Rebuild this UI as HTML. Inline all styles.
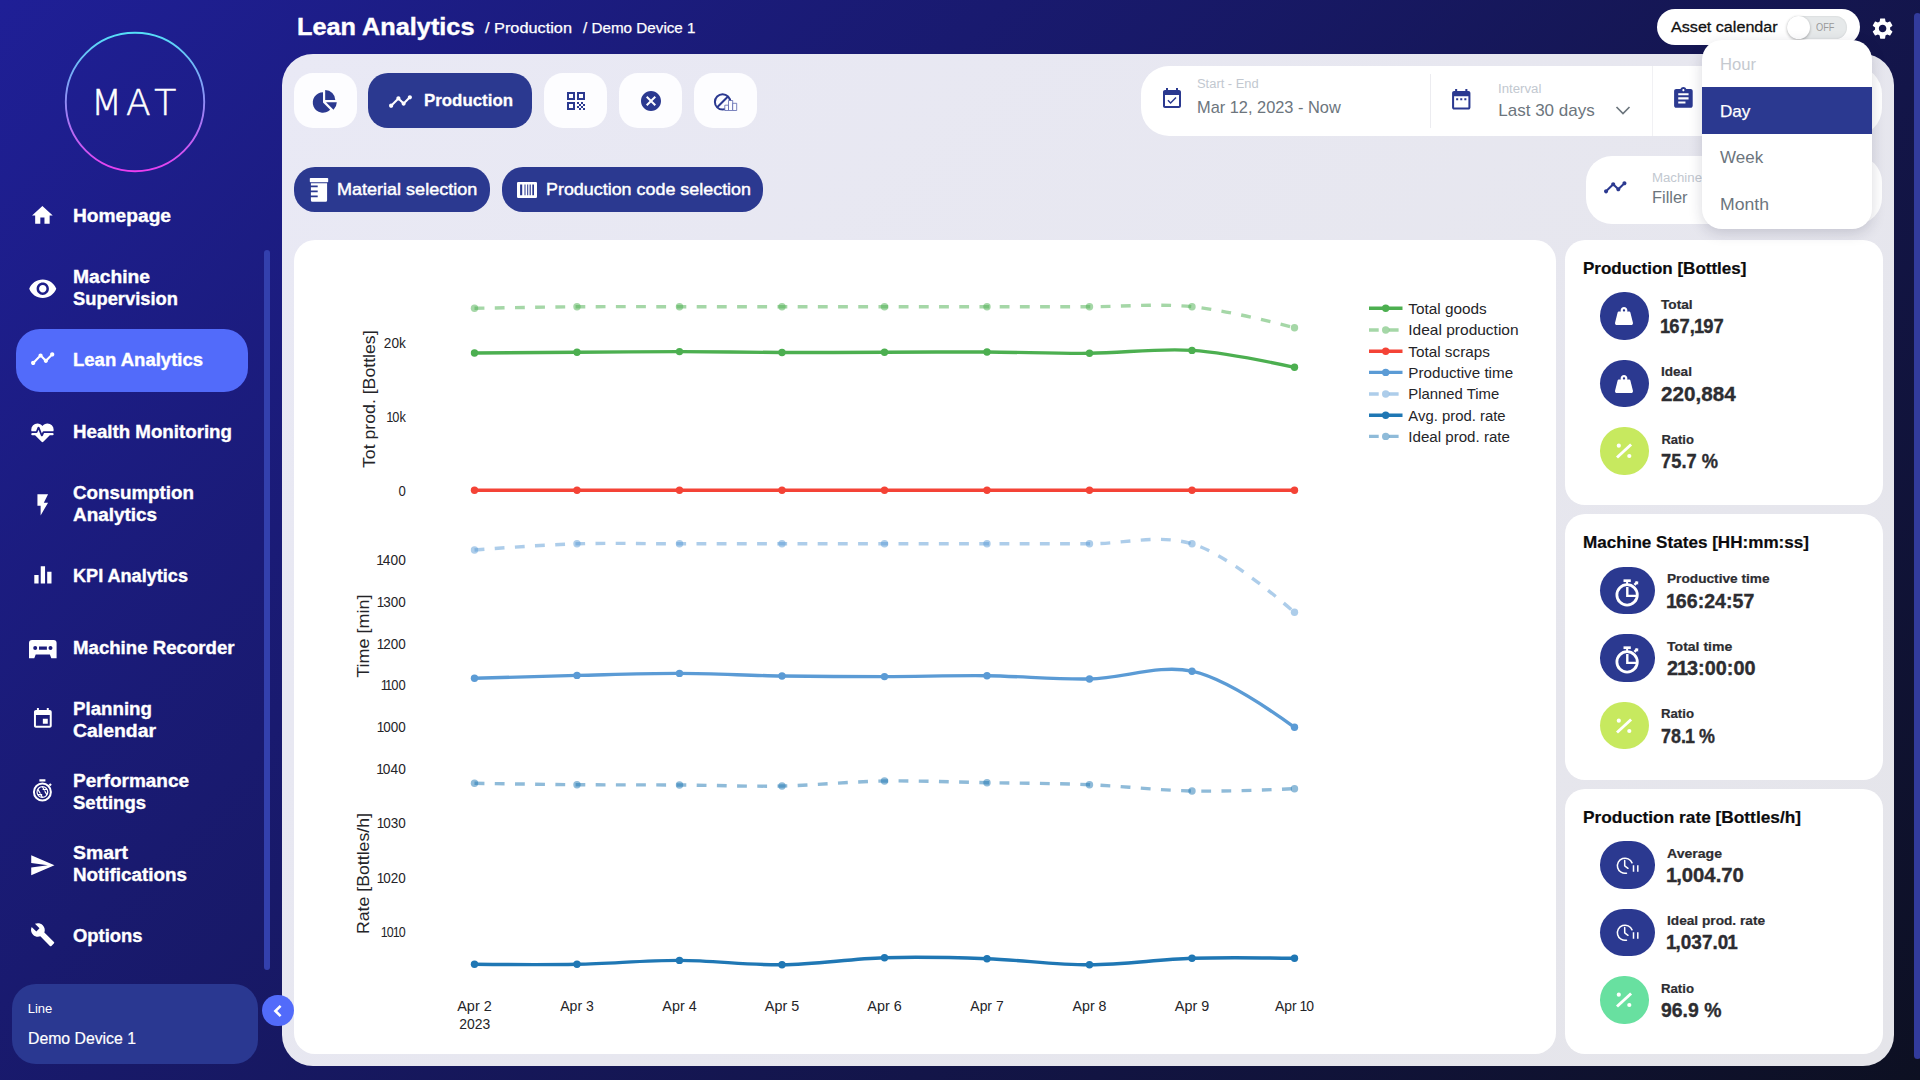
<!DOCTYPE html>
<html lang="en"><head><meta charset="utf-8"><title>Lean Analytics - Production</title>
<style>
*{box-sizing:border-box;margin:0;padding:0}
html,body{width:1920px;height:1080px;overflow:hidden}
body{position:relative;font-family:"Liberation Sans",sans-serif;color:#fff;
 background:linear-gradient(135deg,#1f1f96 0%,#0d1022 100%)}
.t{position:absolute;white-space:nowrap;line-height:1;transform-origin:0 50%;display:block}
.t i{font-style:normal}
.ic{position:absolute;display:block;overflow:visible}
.abs{position:absolute}
</style></head><body>
<aside>
<svg class="ic" style="left:63px;top:30px" width="144" height="144" viewBox="0 0 144 144">
<defs><linearGradient id="lg" x1="0" y1="0" x2="0" y2="1"><stop offset="0" stop-color="#55e0f8"/><stop offset="0.5" stop-color="#8f8cf5"/><stop offset="1" stop-color="#ea3ef0"/></linearGradient></defs>
<circle cx="72" cy="72" r="69.2" fill="none" stroke="url(#lg)" stroke-width="1.9"/>
<text x="28.100 63 91.300" y="85.100" font-family="DejaVu Sans Light, DejaVu Sans, sans-serif" font-weight="200" font-size="36" fill="#fff" stroke="#fff" stroke-width=".55">MAT</text></svg>
<nav>
<svg class="ic" style="left:30.4px;top:202.6px;" width="24.8" height="24.8" viewBox="0 0 24 24" fill="#fff"><path d="M10 20v-6h4v6h5v-8h3L12 3 2 12h3v8z"/></svg>
<span class="t" style="left:72.5px;top:207px;font-size:18px;font-weight:700;transform:scaleX(1.065);-webkit-text-stroke:.35px #fff;">Homepage</span>
<svg class="ic" style="left:27.8px;top:274.4px;" width="29.5" height="29.5" viewBox="0 0 24 24" fill="#fff"><path d="M12 4.5C7 4.5 2.73 7.61 1 12c1.73 4.39 6 7.5 11 7.5s9.27-3.11 11-7.5c-1.73-4.39-6-7.5-11-7.5zM12 17c-2.76 0-5-2.24-5-5s2.24-5 5-5 5 2.24 5 5-2.24 5-5 5zm0-8c-1.66 0-3 1.34-3 3s1.34 3 3 3 3-1.34 3-3-1.34-3-3-3z"/></svg>
<span class="t" style="left:72.5px;top:268px;font-size:18px;font-weight:700;transform:scaleX(1.069);-webkit-text-stroke:.35px #fff;">Machine</span>
<span class="t" style="left:72.5px;top:290px;font-size:18px;font-weight:700;transform:scaleX(1.019);-webkit-text-stroke:.35px #fff;">Supervision</span>
<div style="position:absolute;left:16px;top:329px;width:232px;height:63px;background:#526bfa;border-radius:24px;"></div>
<svg class="ic" style="left:29.8px;top:346.2px;" width="25.4" height="25.4" viewBox="0 0 24 24" fill="#fff"><path d="M23 8c0 1.1-.9 2-2 2-.18 0-.35-.02-.51-.07l-3.56 3.55c.05.16.07.34.07.52 0 1.1-.9 2-2 2s-2-.9-2-2c0-.18.02-.36.07-.52l-2.55-2.55c-.16.05-.34.07-.52.07s-.36-.02-.52-.07l-4.55 4.56c.05.16.07.33.07.51 0 1.1-.9 2-2 2s-2-.9-2-2 .9-2 2-2c.18 0 .35.02.51.07l4.56-4.55C8.02 9.36 8 9.18 8 9c0-1.1.9-2 2-2s2 .9 2 2c0 .18-.02.36-.07.52l2.55 2.55c.16-.05.34-.07.52-.07s.36.02.52.07l3.55-3.56C19.02 8.35 19 8.18 19 8c0-1.1.9-2 2-2s2 .9 2 2z"/></svg>
<span class="t" style="left:72.5px;top:351px;font-size:18px;font-weight:700;transform:scaleX(1.029);-webkit-text-stroke:.35px #fff;">Lean Analytics</span>
<svg class="ic" style="left:29.1px;top:418.9px;" width="26.9" height="26.9" viewBox="0 0 24 24" fill="#fff"><path d="M7.5 4A5.5 5.5 0 0 0 2 9.5c0 .5.09 1 .22 1.5H6.3l1.27-3.37c.3-.8 1.48-.88 1.86 0L11.5 13l.59-1.42c.13-.33.48-.58.91-.58h8.78c.13-.5.22-1 .22-1.500A5.5 5.5 0 0 0 16.5 4c-1.860 0-3.500.93-4.500 2.340C11 4.930 9.360 4 7.500 4M3 12.500a1 1 0 0 0-1 1 1 1 0 0 0 1 1h2.440L11 20c1 .9 1 .9 2 0l5.560-5.500H21a1 1 0 0 0 1-1 1 1 0 0 0-1-1h-7.600l-.93 2.300c-.4 1.010-1.550.870-1.920.030L8.500 9.500l-.960 2.330c-.15.380-.49.670-.94.670H3z"/></svg>
<span class="t" style="left:72.5px;top:423px;font-size:18px;font-weight:700;transform:scaleX(1.039);-webkit-text-stroke:.35px #fff;">Health Monitoring</span>
<svg class="ic" style="left:29.5px;top:491.9px;" width="25.5" height="25.5" viewBox="0 0 24 24" fill="#fff"><path d="M7 2v11h3v9l7-12h-4l4-8z"/></svg>
<span class="t" style="left:72.5px;top:484px;font-size:18px;font-weight:700;transform:scaleX(1.043);-webkit-text-stroke:.35px #fff;">Consumption</span>
<span class="t" style="left:72.5px;top:506px;font-size:18px;font-weight:700;transform:scaleX(1.050);-webkit-text-stroke:.35px #fff;">Analytics</span>
<svg class="ic" style="left:29.6px;top:562.1px;" width="25.8" height="25.8" viewBox="0 0 24 24" fill="#fff"><path d="M10 20h4V4h-4v16zm-6 0h4v-8H4v8zM16 9v11h4V9h-4z"/></svg>
<span class="t" style="left:72.5px;top:567px;font-size:18px;font-weight:700;transform:scaleX(1.005);-webkit-text-stroke:.35px #fff;">KPI Analytics</span>
<svg class="ic" style="left:28.800px;top:640px" width="27.600" height="18.200" viewBox="0 0 27.600 18.200" fill="#fff"><path fill-rule="evenodd" d="M3 0h21.600a3 3 0 0 1 3 3v15.200h-5.300l-1.400-3.600H6.700l-1.400 3.600H0V3a3 3 0 0 1 3-3zM6.200 6.100a2 2 0 1 0 0 4 2 2 0 0 0 0-4zm15.300 0a2 2 0 1 0 0 4 2 2 0 0 0 0-4zM10 6.600v3.100h7.900V6.600z"/></svg>
<span class="t" style="left:72.5px;top:639px;font-size:18px;font-weight:700;transform:scaleX(1.035);-webkit-text-stroke:.35px #fff;">Machine Recorder</span>
<svg class="ic" style="left:30.9px;top:707.2px;" width="23.7" height="23.7" viewBox="0 0 24 24" fill="#fff"><path d="M17 12h-5v5h5v-5zM16 1v2H8V1H6v2H5c-1.110 0-1.990.9-1.990 2L3 19c0 1.100.89 2 2 2h14c1.100 0 2-.9 2-2V5c0-1.100-.9-2-2-2h-1V1h-2zm3 18H5V8h14v11z"/></svg>
<span class="t" style="left:72.5px;top:700px;font-size:18px;font-weight:700;transform:scaleX(1.039);-webkit-text-stroke:.35px #fff;">Planning</span>
<span class="t" style="left:72.5px;top:722px;font-size:18px;font-weight:700;transform:scaleX(1.078);-webkit-text-stroke:.35px #fff;">Calendar</span>
<svg class="ic" style="left:29.3px;top:776.9px;" width="26.8" height="26.8" viewBox="0 0 24 24" fill="#fff"><g fill="none" stroke="#fff"><circle cx="12" cy="13.500" r="7.600" stroke-width="1.800"/><circle cx="12" cy="13.500" r="4.800" stroke-width="1.100"/><path stroke-width="1.100" d="M12 8.700l2 3.400M16.200 11.200h-4M16.100 16l-2-3.400M12 18.300l-2-3.400M7.800 15.800h4M7.900 11l2 3.400"/><path stroke-width="2" d="M9.300 3h5.400M18.300 6.200l1.400 1.400"/></g></svg>
<span class="t" style="left:72.5px;top:772px;font-size:18px;font-weight:700;transform:scaleX(1.054);-webkit-text-stroke:.35px #fff;">Performance</span>
<span class="t" style="left:72.5px;top:794px;font-size:18px;font-weight:700;transform:scaleX(1.028);-webkit-text-stroke:.35px #fff;">Settings</span>
<svg class="ic" style="left:29.2px;top:852.2px;" width="26.6" height="26.6" viewBox="0 0 24 24" fill="#fff"><path d="M2.010 21L23 12 2.010 3 2 10l15 2-15 2z"/></svg>
<span class="t" style="left:72.5px;top:844px;font-size:18px;font-weight:700;transform:scaleX(1.078);-webkit-text-stroke:.35px #fff;">Smart</span>
<span class="t" style="left:72.5px;top:866px;font-size:18px;font-weight:700;transform:scaleX(1.046);-webkit-text-stroke:.35px #fff;">Notifications</span>
<svg class="ic" style="left:29.9px;top:922.4px;" width="25.3" height="25.3" viewBox="0 0 24 24" fill="#fff"><path d="M22.700 19l-9.100-9.100c.9-2.300.4-5-1.500-6.900-2-2-5-2.400-7.400-1.300L9 6 6 9 1.600 4.700C.4 7.100.9 10.100 2.900 12.100c1.900 1.900 4.600 2.400 6.900 1.500l9.100 9.100c.4.400 1 .400 1.400 0l2.300-2.300c.5-.4.500-1.100.100-1.400z"/></svg>
<span class="t" style="left:72.5px;top:927px;font-size:18px;font-weight:700;transform:scaleX(1.022);-webkit-text-stroke:.35px #fff;">Options</span>
</nav>
<div style="position:absolute;left:264px;top:250px;width:6px;height:720px;background:#3340ad;border-radius:3px;"></div>
<div style="position:absolute;left:12px;top:984px;width:246px;height:80px;background:#2a3891;border-radius:24px;"></div>
<span class="t" style="left:27.7px;top:1002px;font-size:13px;">Line</span>
<span class="t" style="left:27.7px;top:1031px;font-size:16px;transform:scaleX(0.987);-webkit-text-stroke:.2px #fff;">Demo Device 1</span>
</aside>
<header>
<span class="t" style="left:297.0px;top:15px;font-size:24px;font-weight:700;transform:scaleX(1.053);-webkit-text-stroke:.4px #fff;">Lean Analytics</span>
<span class="t" style="left:485.0px;top:20px;font-size:15px;transform:scaleX(1.087);-webkit-text-stroke:.25px #fff;">/ Production</span>
<span class="t" style="left:582.5px;top:20px;font-size:15px;transform:scaleX(1.015);-webkit-text-stroke:.25px #fff;">/ Demo Device 1</span>
<div style="position:absolute;left:1657px;top:9px;width:203px;height:36px;background:#fff;border-radius:18px;"></div>
<span class="t" style="left:1670.8px;top:19px;font-size:15px;color:#111;transform:scaleX(1.075);-webkit-text-stroke:.3px #111;">Asset calendar</span>
<div style="position:absolute;left:1787px;top:16px;width:60px;height:22.5px;background:#e6e9ea;border-radius:11.5px;box-shadow:inset 0 0 2px rgba(0,0,0,.12);"></div>
<div style="position:absolute;left:1787px;top:15.5px;width:23px;height:23px;background:#fff;border-radius:11.5px;box-shadow:0 1px 3px rgba(0,0,0,.3);"></div>
<span class="t" style="left:1815.8px;top:23px;font-size:10px;color:#9a9a9a;transform:scaleX(0.925);">OFF</span>
<svg class="ic" style="left:1869.9px;top:15.9px;" width="25.2" height="25.2" viewBox="0 0 24 24" fill="#fff"><path d="M19.140 12.940c.04-.3.060-.610.060-.940 0-.32-.02-.640-.070-.940l2.030-1.580c.18-.14.230-.410.120-.610l-1.920-3.320c-.12-.22-.370-.29-.590-.22l-2.390.960c-.5-.38-1.030-.7-1.620-.940L14.400 2.810c-.04-.24-.240-.410-.480-.410h-3.840c-.24 0-.430.170-.470.410L9.250 5.350C8.660 5.590 8.120 5.920 7.630 6.290L5.240 5.330c-.22-.08-.470 0-.590.220L2.740 8.870C2.620 9.080 2.660 9.340 2.860 9.480l2.030 1.580C4.840 11.360 4.800 11.690 4.800 12s.02.640.070.940l-2.030 1.580c-.18.140-.230.410-.120.610l1.920 3.320c.12.220.370.290.590.220l2.390-.96c.5.380 1.030.7 1.620.940l.36 2.540c.05.240.240.410.480.410h3.840c.24 0 .440-.17.470-.410l.36-2.540c.59-.24 1.130-.56 1.620-.940l2.390.960c.22.080.470 0 .590-.22l1.920-3.320c.12-.22.070-.47-.12-.610L19.140 12.940zM12 15.600c-1.980 0-3.600-1.620-3.600-3.600s1.620-3.600 3.600-3.600 3.600 1.620 3.600 3.600S13.980 15.600 12 15.600z"/></svg>
</header>
<main>
<div style="position:absolute;left:282px;top:54px;width:1612px;height:1011.7px;background:linear-gradient(135deg,#e9e9f5 0%,#e5e5ea 100%);border-radius:31px;"></div>
<div style="position:absolute;left:294px;top:73px;width:63px;height:55px;background:#fdfdff;border-radius:19px;"></div>
<div style="position:absolute;left:544px;top:73px;width:63px;height:55px;background:#fdfdff;border-radius:19px;"></div>
<div style="position:absolute;left:619px;top:73px;width:63px;height:55px;background:#fdfdff;border-radius:19px;"></div>
<div style="position:absolute;left:694px;top:73px;width:63px;height:55px;background:#fdfdff;border-radius:19px;"></div>
<div style="position:absolute;left:368px;top:73px;width:164px;height:55px;background:#2b3990;border-radius:20px;"></div>
<svg class="ic" style="left:388.0px;top:88.5px;" width="25" height="25" viewBox="0 0 24 24" fill="#fff"><path d="M23 8c0 1.1-.9 2-2 2-.18 0-.35-.02-.51-.07l-3.56 3.55c.05.16.07.34.07.52 0 1.1-.9 2-2 2s-2-.9-2-2c0-.18.02-.36.07-.52l-2.55-2.55c-.16.05-.34.07-.52.07s-.36-.02-.52-.07l-4.55 4.56c.05.16.07.33.07.51 0 1.1-.9 2-2 2s-2-.9-2-2 .9-2 2-2c.18 0 .35.02.51.07l4.56-4.55C8.02 9.36 8 9.18 8 9c0-1.1.9-2 2-2s2 .9 2 2c0 .18-.02.36-.07.52l2.55 2.55c.16-.05.34-.07.52-.07s.36.02.52.07l3.55-3.56C19.02 8.35 19 8.18 19 8c0-1.1.9-2 2-2s2 .9 2 2z"/></svg>
<span class="t" style="left:423.7px;top:92px;font-size:17px;font-weight:700;transform:scaleX(0.992);-webkit-text-stroke:.3px #fff;">Production</span>
<svg class="ic" style="left:310px;top:86px" width="30" height="30" viewBox="310 86 30 30" fill="#2b3990"><path d="M323,102.500L323,92.300A10.200,10.200 0 1 0 330.200,109.700Z"/><path d="M325.200,100.100L325.200,90A10.100,10.100 0 0 1 335.300,100.100Z"/><path d="M326,102.300L336.800,102.300A10.800,10.800 0 0 1 333.500,109.800Z"/></svg>
<svg class="ic" style="left:563.5px;top:89.0px;" width="24" height="24" viewBox="0 0 24 24" fill="#2b3990"><path fill-rule="evenodd" d="M3 3h8v8H3zm2 2v4h4V5zM13 3h8v8h-8zm2 2v4h4V5zM3 13h8v8H3zm2 2v4h4v-4zM13 13h2v2h-2zm2 2h2v2h-2zm2-2h2v2h-2zm2 2h2v2h-2zm-6 2h2v2h-2zm2 2h2v2h-2zm2-2h2v2h-2zm2 2h2v2h-2z"/></svg>
<svg class="ic" style="left:639.0px;top:88.8px;" width="24" height="24" viewBox="0 0 24 24" fill="#2b3990"><path d="M12 2C6.470 2 2 6.470 2 12s4.470 10 10 10 10-4.470 10-10S17.530 2 12 2zm5 13.590L15.590 17 12 13.410 8.410 17 7 15.590 10.590 12 7 8.410 8.410 7 12 10.590 15.590 7 17 8.410 13.410 12 17 15.590z"/></svg>
<svg class="ic" style="left:710px;top:88px" width="32" height="28" viewBox="710 88 32 28" fill="none" stroke="#2b3990"><circle cx="722.600" cy="101.900" r="7.700" stroke-width="2"/><path d="M728,96.500L717.200,107.300" stroke-width="2"/><g stroke-width=".8" fill="#fdfdff" stroke="#5a66ad"><path d="M724.800,105.200h3.700v5.300h-3.700z"/><path d="M728.500,100.500h4.200v10h-4.200z"/><path d="M732.700,103.300h4v7.200h-4z"/></g></svg>
<div style="position:absolute;left:294px;top:167px;width:196px;height:45px;background:#2b3990;border-radius:21px;"></div>
<svg class="ic" style="left:308px;top:176px" width="22" height="28" viewBox="308 176 22 28" fill="#fff"><rect x="309.800" y="177.900" width="18.400" height="4.400" rx=".8"/><path fill-rule="evenodd" d="M310.900,183.300h16.200v17a1.500,1.500 0 0 1 -1.500,1.500h-13.200a1.500,1.500 0 0 1 -1.500,-1.500v-3h6.800v-1.700h-6.800v-3.300h6.800v-1.700h-6.800v-3.300h6.800v-1.700h-6.800z"/></svg>
<span class="t" style="left:337.3px;top:181px;font-size:17px;transform:scaleX(1.060);-webkit-text-stroke:.45px #fff;">Material selection</span>
<div style="position:absolute;left:502px;top:167px;width:261px;height:45px;background:#2b3990;border-radius:21px;"></div>
<svg class="ic" style="left:516px;top:180px" width="22" height="20" viewBox="516 180 22 20" fill="#fff"><path fill-rule="evenodd" d="M518.200,181.900h17.600a1.200,1.200 0 0 1 1.200,1.200v13.600a1.200,1.200 0 0 1 -1.200,1.200h-17.600a1.200,1.200 0 0 1 -1.200,-1.200v-13.600a1.200,1.200 0 0 1 1.200,-1.200zM520.100,184.600v10.600h2.100v-10.600zM524.500,184.600v10.600h1v-10.600zM527.200,184.600v10.600h1v-10.600zM529.600,184.600v10.600h1.200v-10.600zM532.300,184.600v10.600h1.700v-10.600z"/></svg>
<span class="t" style="left:545.5px;top:181px;font-size:17px;transform:scaleX(1.053);-webkit-text-stroke:.45px #fff;">Production code selection</span>
<div style="position:absolute;left:1141px;top:66px;width:741px;height:70px;background:#fff;border-radius:28px;"></div>
<svg class="ic" style="left:1160.0px;top:86.7px;" width="24" height="24" viewBox="0 0 24 24" fill="#2b3990"><path d="M16.530 11.060L15.470 10l-4.880 4.880-2.120-2.120-1.060 1.060L10.590 17l5.940-5.940zM19 3h-1V1h-2v2H8V1H6v2H5c-1.110 0-1.990.9-1.990 2L3 19c0 1.100.89 2 2 2h14c1.100 0 2-.9 2-2V5c0-1.100-.9-2-2-2zm0 16H5V8h14v11z"/></svg>
<span class="t" style="left:1197.0px;top:78px;font-size:12px;color:#c2c8d0;transform:scaleX(1.076);">Start - End</span>
<span class="t" style="left:1197.0px;top:99px;font-size:17px;color:#6c757d;transform:scaleX(0.963);">Mar 12, 2023 - Now</span>
<div style="position:absolute;left:1430.4px;top:74px;width:1px;height:54px;background:#ececf0;border-radius:0px;"></div>
<svg class="ic" style="left:1449.2px;top:86.5px;" width="24.5" height="24.5" viewBox="0 0 24 24" fill="#2b3990"><path d="M9 11H7v2h2v-2zm4 0h-2v2h2v-2zm4 0h-2v2h2v-2zm2-7h-1V2h-2v2H8V2H6v2H5c-1.110 0-1.990.9-1.990 2L3 20c0 1.100.89 2 2 2h14c1.100 0 2-.9 2-2V6c0-1.100-.9-2-2-2zm0 16H5V9h14v11z"/></svg>
<span class="t" style="left:1498.3px;top:83px;font-size:12px;color:#c2c8d0;transform:scaleX(1.103);">Interval</span>
<span class="t" style="left:1498.3px;top:102px;font-size:17px;color:#6c757d;">Last 30 days</span>
<svg class="ic" style="left:1612px;top:102px" width="22" height="18" viewBox="1612 102 22 18" fill="none" stroke="#6c757d" stroke-width="1.700"><path d="M1616.500,107L1623,113.500L1629.500,107"/></svg>
<div style="position:absolute;left:1652.2px;top:66px;width:1px;height:70px;background:#f1f1f4;border-radius:0px;"></div>
<svg class="ic" style="left:1671.1px;top:86.4px;" width="24.8" height="24.8" viewBox="0 0 24 24" fill="#2b3990"><path d="M19 3h-4.180C14.400 1.840 13.300 1 12 1c-1.300 0-2.400.84-2.820 2H5c-1.100 0-2 .9-2 2v14c0 1.100.9 2 2 2h14c1.100 0 2-.9 2-2V5c0-1.100-.9-2-2-2zm-7 0c.55 0 1 .45 1 1s-.45 1-1 1-1-.45-1-1 .45-1 1-1zm2 14H7v-2h7v2zm3-4H7v-2h10v2zm0-4H7V7h10v2z"/></svg>
<div style="position:absolute;left:1586px;top:156px;width:296px;height:68px;background:#fff;border-radius:26px;"></div>
<svg class="ic" style="left:1603.2px;top:175.2px;" width="24.5" height="24.5" viewBox="0 0 24 24" fill="#2b3990"><path d="M23 8c0 1.1-.9 2-2 2-.18 0-.35-.02-.51-.07l-3.56 3.55c.05.16.07.34.07.52 0 1.1-.9 2-2 2s-2-.9-2-2c0-.18.02-.36.07-.52l-2.55-2.55c-.16.05-.34.07-.52.07s-.36-.02-.52-.07l-4.55 4.56c.05.16.07.33.07.51 0 1.1-.9 2-2 2s-2-.9-2-2 .9-2 2-2c.18 0 .35.02.51.07l4.56-4.55C8.02 9.36 8 9.18 8 9c0-1.1.9-2 2-2s2 .9 2 2c0 .18-.02.36-.07.52l2.55 2.55c.16-.05.34-.07.52-.07s.36.02.52.07l3.55-3.56C19.02 8.35 19 8.18 19 8c0-1.1.9-2 2-2s2 .9 2 2z"/></svg>
<span class="t" style="left:1652.0px;top:172px;font-size:12px;color:#c2c8d0;transform:scaleX(1.102);">Machine</span>
<span class="t" style="left:1652.0px;top:189px;font-size:17px;color:#6c757d;transform:scaleX(0.964);">Filler</span>
<div class="chart-card" style="position:absolute;left:294px;top:240px;width:1261.8px;height:813.6px;background:#fff;border-radius:21px;"></div>
</main>
<div style="position:absolute;left:1565.4px;top:240px;width:317.6px;height:265px;background:#fff;border-radius:20px;"></div>
<section>
<span class="t" style="left:1583.0px;top:260px;font-size:17px;font-weight:700;color:#0b0b0d;-webkit-text-stroke:.2px #0b0b0d;">Production [Bottles]</span>
<div style="position:absolute;left:1600px;top:292.2px;width:49px;height:47.6px;background:#2b3990;border-radius:23.8px;"></div>
<svg class="ic" style="left:1615.0px;top:307.0px;" width="18" height="18" viewBox="0 0 512 512" fill="#fff"><path d="M510.280 445.860l-73.030-292.130c-3.800-15.190-16.440-25.720-30.870-25.720h-60.250c3.570-10.050 5.880-20.720 5.880-32 0-53.020-42.980-96-96-96s-96 42.980-96 96c0 11.280 2.300 21.950 5.880 32h-60.250c-14.430 0-27.080 10.540-30.870 25.720L1.720 445.860C-6.610 479.170 16.380 512 48.030 512h415.950c31.640 0 54.630-32.830 46.300-66.140zM256 128c-17.640 0-32-14.360-32-32s14.360-32 32-32 32 14.360 32 32-14.360 32-32 32z"/></svg>
<span class="t" style="left:1661.4px;top:298px;font-size:13px;font-weight:700;color:#2d2d31;transform:scaleX(1.050);-webkit-text-stroke:.2px #2d2d31;">Total</span>
<svg class="ic" style="left:1661.4px;top:313px" width="69" height="28" viewBox="0 -20 69 28"><text transform="scale(0.928,1)" dx="-1.03 -1.03 0.00 0.00 -1.03 -1.03 0.00" font-family="Liberation Sans, sans-serif" font-weight="700" font-size="19.8" fill="#2d2d31" stroke="#2d2d31" stroke-width="0.35">167,197</text></svg>
<div style="position:absolute;left:1600px;top:359.7px;width:49px;height:47.6px;background:#2b3990;border-radius:23.8px;"></div>
<svg class="ic" style="left:1615.0px;top:374.5px;" width="18" height="18" viewBox="0 0 512 512" fill="#fff"><path d="M510.280 445.860l-73.030-292.130c-3.800-15.190-16.440-25.720-30.870-25.720h-60.250c3.570-10.050 5.880-20.720 5.880-32 0-53.020-42.980-96-96-96s-96 42.980-96 96c0 11.280 2.300 21.950 5.880 32h-60.250c-14.430 0-27.080 10.540-30.870 25.720L1.720 445.860C-6.610 479.170 16.380 512 48.030 512h415.950c31.640 0 54.630-32.830 46.300-66.140zM256 128c-17.640 0-32-14.360-32-32s14.360-32 32-32 32 14.360 32 32-14.360 32-32 32z"/></svg>
<span class="t" style="left:1661.4px;top:365px;font-size:13px;font-weight:700;color:#2d2d31;transform:scaleX(1.043);-webkit-text-stroke:.2px #2d2d31;">Ideal</span>
<svg class="ic" style="left:1661.4px;top:381px" width="81" height="28" viewBox="0 -20 81 28"><text transform="scale(1.042,1)" dx="0.00 0.00 0.00 0.00 0.00 0.00 0.00" font-family="Liberation Sans, sans-serif" font-weight="700" font-size="19.8" fill="#2d2d31" stroke="#2d2d31" stroke-width="0.35">220,884</text></svg>
<div style="position:absolute;left:1600px;top:427.2px;width:49px;height:47.6px;background:#c7e95f;border-radius:23.8px;"></div>
<svg class="ic" style="left:1612.1px;top:439px" width="24" height="24" viewBox="-12 -12 24 24" fill="#fff"><path d="M-7,6.500L7.100,-6.500" stroke="#fff" stroke-width="2.900" fill="none"/><circle cx="-5.200" cy="-5.300" r="2.100"/><circle cx="5.300" cy="5" r="2.100"/></svg>
<span class="t" style="left:1661.4px;top:433px;font-size:13px;font-weight:700;color:#2d2d31;-webkit-text-stroke:.2px #2d2d31;">Ratio</span>
<svg class="ic" style="left:1661.4px;top:448px" width="63" height="28" viewBox="0 -20 63 28"><text transform="scale(0.925,1)" dx="0.00 0.00 0.00 0.00 0.00 0.00" font-family="Liberation Sans, sans-serif" font-weight="700" font-size="19.8" fill="#2d2d31" stroke="#2d2d31" stroke-width="0.35">75.7 %</text></svg>
</section>
<div style="position:absolute;left:1565.4px;top:514px;width:317.6px;height:266px;background:#fff;border-radius:20px;"></div>
<section>
<span class="t" style="left:1583.0px;top:534px;font-size:17px;font-weight:700;color:#0b0b0d;transform:scaleX(1.005);-webkit-text-stroke:.2px #0b0b0d;">Machine States [HH:mm:ss]</span>
<div style="position:absolute;left:1600px;top:566.8px;width:55px;height:47.6px;background:#2b3990;border-radius:23.8px;"></div>
<svg class="ic" style="left:1611.5px;top:574.6px" width="32" height="32" viewBox="-16 -16 32 32" fill="none" stroke="#fff"><circle cx="-.9" cy="3.900" r="10.200" stroke-width="2.800"/><path d="M-.7,-4V4.900H8.200" stroke-width="2.400"/><path d="M-4.500,-10.300h7.300" stroke-width="2.700"/><path d="M-.9,-9.500v3" stroke-width="2"/><path d="M6.500,-6.200l2.600,-2.600" stroke-width="2.600"/><path d="M7.100,-9.700l3.200,.3-.2,3.300z" fill="#fff" stroke="none"/></svg>
<span class="t" style="left:1666.7px;top:572px;font-size:13px;font-weight:700;color:#2d2d31;transform:scaleX(1.052);-webkit-text-stroke:.2px #2d2d31;">Productive time</span>
<svg class="ic" style="left:1666.7px;top:588px" width="93" height="28" viewBox="0 -20 93 28"><text transform="scale(0.990,1)" dx="-1.03 -1.03 0.00 0.00 0.00 0.00 0.00 0.00 0.00" font-family="Liberation Sans, sans-serif" font-weight="700" font-size="19.8" fill="#2d2d31" stroke="#2d2d31" stroke-width="0.35">166:24:57</text></svg>
<div style="position:absolute;left:1600px;top:634.2px;width:55px;height:47.6px;background:#2b3990;border-radius:23.8px;"></div>
<svg class="ic" style="left:1611.5px;top:642px" width="32" height="32" viewBox="-16 -16 32 32" fill="none" stroke="#fff"><circle cx="-.9" cy="3.900" r="10.200" stroke-width="2.800"/><path d="M-.7,-4V4.900H8.200" stroke-width="2.400"/><path d="M-4.500,-10.300h7.300" stroke-width="2.700"/><path d="M-.9,-9.500v3" stroke-width="2"/><path d="M6.500,-6.200l2.600,-2.600" stroke-width="2.600"/><path d="M7.100,-9.700l3.200,.3-.2,3.300z" fill="#fff" stroke="none"/></svg>
<span class="t" style="left:1666.7px;top:640px;font-size:13px;font-weight:700;color:#2d2d31;transform:scaleX(1.081);-webkit-text-stroke:.2px #2d2d31;">Total time</span>
<svg class="ic" style="left:1666.7px;top:655px" width="95" height="28" viewBox="0 -20 95 28"><text transform="scale(1.004,1)" dx="0.00 -1.03 -1.03 0.00 0.00 0.00 0.00 0.00 0.00" font-family="Liberation Sans, sans-serif" font-weight="700" font-size="19.8" fill="#2d2d31" stroke="#2d2d31" stroke-width="0.35">213:00:00</text></svg>
<div style="position:absolute;left:1600px;top:701.7px;width:49px;height:47.6px;background:#c7e95f;border-radius:23.8px;"></div>
<svg class="ic" style="left:1612.1px;top:713.5px" width="24" height="24" viewBox="-12 -12 24 24" fill="#fff"><path d="M-7,6.500L7.100,-6.500" stroke="#fff" stroke-width="2.900" fill="none"/><circle cx="-5.200" cy="-5.300" r="2.100"/><circle cx="5.300" cy="5" r="2.100"/></svg>
<span class="t" style="left:1661.0px;top:707px;font-size:13px;font-weight:700;color:#2d2d31;transform:scaleX(1.015);-webkit-text-stroke:.2px #2d2d31;">Ratio</span>
<svg class="ic" style="left:1661.0px;top:723px" width="60" height="28" viewBox="0 -20 60 28"><text transform="scale(0.906,1)" dx="0.00 0.00 0.00 -1.03 -1.03 0.00" font-family="Liberation Sans, sans-serif" font-weight="700" font-size="19.8" fill="#2d2d31" stroke="#2d2d31" stroke-width="0.35">78.1 %</text></svg>
</section>
<div style="position:absolute;left:1565.4px;top:789px;width:317.6px;height:264.6px;background:#fff;border-radius:20px;"></div>
<section>
<span class="t" style="left:1583.0px;top:809px;font-size:17px;font-weight:700;color:#0b0b0d;transform:scaleX(1.017);-webkit-text-stroke:.2px #0b0b0d;">Production rate [Bottles/h]</span>
<div style="position:absolute;left:1600px;top:841.2px;width:55px;height:47.6px;background:#2b3990;border-radius:23.8px;"></div>
<svg class="ic" style="left:1611.5px;top:849px" width="32" height="32" viewBox="-16 -16 32 32" fill="none" stroke="#fff" stroke-width="1.500" stroke-linecap="round"><path d="M4.050,-2.100A7.600,7.600 0 1 0 -1.500,8.200"/><path d="M-3.300,-4.600V.8L0,3.300" stroke-linejoin="round"/><path d="M5.500,.2v6.500M9.800,.2v6.500" stroke-linecap="butt" stroke-width="1.500"/></svg>
<span class="t" style="left:1666.7px;top:847px;font-size:13px;font-weight:700;color:#2d2d31;transform:scaleX(1.082);-webkit-text-stroke:.2px #2d2d31;">Average</span>
<svg class="ic" style="left:1666.7px;top:862px" width="83" height="28" viewBox="0 -20 83 28"><text transform="scale(1.025,1)" dx="-1.03 -1.03 0.00 0.00 0.00 0.00 0.00 0.00" font-family="Liberation Sans, sans-serif" font-weight="700" font-size="19.8" fill="#2d2d31" stroke="#2d2d31" stroke-width="0.35">1,004.70</text></svg>
<div style="position:absolute;left:1600px;top:908.6px;width:55px;height:47.6px;background:#2b3990;border-radius:23.8px;"></div>
<svg class="ic" style="left:1611.5px;top:916.4px" width="32" height="32" viewBox="-16 -16 32 32" fill="none" stroke="#fff" stroke-width="1.500" stroke-linecap="round"><path d="M4.050,-2.100A7.600,7.600 0 1 0 -1.500,8.200"/><path d="M-3.300,-4.600V.8L0,3.300" stroke-linejoin="round"/><path d="M5.500,.2v6.500M9.800,.2v6.500" stroke-linecap="butt" stroke-width="1.500"/></svg>
<span class="t" style="left:1666.7px;top:914px;font-size:13px;font-weight:700;color:#2d2d31;transform:scaleX(1.052);-webkit-text-stroke:.2px #2d2d31;">Ideal prod. rate</span>
<svg class="ic" style="left:1666.7px;top:929px" width="77" height="28" viewBox="0 -20 77 28"><text transform="scale(0.957,1)" dx="-1.03 -1.03 0.00 0.00 0.00 0.00 0.00 -1.03" font-family="Liberation Sans, sans-serif" font-weight="700" font-size="19.8" fill="#2d2d31" stroke="#2d2d31" stroke-width="0.35">1,037.01</text></svg>
<div style="position:absolute;left:1600px;top:976.2px;width:49px;height:47.6px;background:#68e0a0;border-radius:23.8px;"></div>
<svg class="ic" style="left:1612.1px;top:988px" width="24" height="24" viewBox="-12 -12 24 24" fill="#fff"><path d="M-7,6.500L7.100,-6.500" stroke="#fff" stroke-width="2.900" fill="none"/><circle cx="-5.200" cy="-5.300" r="2.100"/><circle cx="5.300" cy="5" r="2.100"/></svg>
<span class="t" style="left:1661.0px;top:982px;font-size:13px;font-weight:700;color:#2d2d31;transform:scaleX(1.015);-webkit-text-stroke:.2px #2d2d31;">Ratio</span>
<svg class="ic" style="left:1661.0px;top:997px" width="66" height="28" viewBox="0 -20 66 28"><text transform="scale(0.980,1)" dx="0.00 0.00 0.00 0.00 0.00 0.00" font-family="Liberation Sans, sans-serif" font-weight="700" font-size="19.8" fill="#2d2d31" stroke="#2d2d31" stroke-width="0.35">96.9 %</text></svg>
</section>
<svg class="ic" role="img" aria-label="Production chart" style="left:294px;top:240px" width="1262" height="813" viewBox="294 240 1262 813" font-family="Liberation Sans, sans-serif" font-size="14" fill="#242428">
<g><path d="M474.5,353.0Q542.8,352.5 577.0,352.3C611.2,352.1 645.3,351.6 679.5,351.6C713.7,351.6 747.8,352.4 782.0,352.5C816.2,352.6 850.3,352.4 884.5,352.3C918.7,352.2 952.8,351.8 987.0,352.0C1021.2,352.2 1055.3,353.6 1089.5,353.3C1123.7,353.0 1157.9,348.1 1192.0,350.4Q1226.3,352.7 1294.5,367.3" fill="none" stroke="#4caf50" stroke-opacity="1" stroke-width="3.400"/>
<g fill="#4caf50" fill-opacity="1"><circle cx="474.5" cy="353.0" r="3.700"/><circle cx="577.0" cy="352.3" r="3.700"/><circle cx="679.5" cy="351.6" r="3.700"/><circle cx="782.0" cy="352.5" r="3.700"/><circle cx="884.5" cy="352.3" r="3.700"/><circle cx="987.0" cy="352.0" r="3.700"/><circle cx="1089.5" cy="353.3" r="3.700"/><circle cx="1192.0" cy="350.4" r="3.700"/><circle cx="1294.5" cy="367.3" r="3.700"/></g></g>
<g><path d="M474.5,308.3Q542.8,307.1 577.0,306.8C611.2,306.5 645.3,306.7 679.5,306.7C713.7,306.7 747.8,306.7 782.0,306.7C816.2,306.7 850.3,306.7 884.5,306.7C918.7,306.7 952.8,306.7 987.0,306.7C1021.2,306.7 1055.3,306.7 1089.5,306.7C1123.7,306.7 1158.0,303.3 1192.0,306.7Q1226.3,310.2 1294.5,327.7" fill="none" stroke="#4caf50" stroke-opacity="0.5" stroke-width="3.400" stroke-dasharray="9.800 10.400"/>
<g fill="#4caf50" fill-opacity="0.5"><circle cx="474.5" cy="308.3" r="3.700"/><circle cx="577.0" cy="306.8" r="3.700"/><circle cx="679.5" cy="306.7" r="3.700"/><circle cx="782.0" cy="306.7" r="3.700"/><circle cx="884.5" cy="306.7" r="3.700"/><circle cx="987.0" cy="306.7" r="3.700"/><circle cx="1089.5" cy="306.7" r="3.700"/><circle cx="1192.0" cy="306.7" r="3.700"/><circle cx="1294.5" cy="327.7" r="3.700"/></g></g>
<g><path d="M474.5,490.3Q542.8,490.3 577.0,490.3C611.2,490.3 645.3,490.3 679.5,490.3C713.7,490.3 747.8,490.3 782.0,490.3C816.2,490.3 850.3,490.3 884.5,490.3C918.7,490.3 952.8,490.3 987.0,490.3C1021.2,490.3 1055.3,490.3 1089.5,490.3C1123.7,490.3 1157.8,490.3 1192.0,490.3Q1226.2,490.3 1294.5,490.3" fill="none" stroke="#f44336" stroke-opacity="1" stroke-width="3.400"/>
<g fill="#f44336" fill-opacity="1"><circle cx="474.5" cy="490.3" r="3.700"/><circle cx="577.0" cy="490.3" r="3.700"/><circle cx="679.5" cy="490.3" r="3.700"/><circle cx="782.0" cy="490.3" r="3.700"/><circle cx="884.5" cy="490.3" r="3.700"/><circle cx="987.0" cy="490.3" r="3.700"/><circle cx="1089.5" cy="490.3" r="3.700"/><circle cx="1192.0" cy="490.3" r="3.700"/><circle cx="1294.5" cy="490.3" r="3.700"/></g></g>
<g><path d="M474.5,678.3Q542.8,676.2 577.0,675.4C611.2,674.6 645.3,673.3 679.5,673.4C713.7,673.5 747.8,675.5 782.0,676.0C816.2,676.5 850.3,676.6 884.5,676.6C918.7,676.6 952.8,675.3 987.0,675.7C1021.2,676.1 1055.4,679.7 1089.5,679.0C1123.7,678.3 1158.9,664.1 1192.0,671.2Q1227.3,678.8 1294.5,727.3" fill="none" stroke="#5b9bd5" stroke-opacity="1" stroke-width="3.400"/>
<g fill="#5b9bd5" fill-opacity="1"><circle cx="474.5" cy="678.3" r="3.700"/><circle cx="577.0" cy="675.4" r="3.700"/><circle cx="679.5" cy="673.4" r="3.700"/><circle cx="782.0" cy="676.0" r="3.700"/><circle cx="884.5" cy="676.6" r="3.700"/><circle cx="987.0" cy="675.7" r="3.700"/><circle cx="1089.5" cy="679.0" r="3.700"/><circle cx="1192.0" cy="671.2" r="3.700"/><circle cx="1294.5" cy="727.3" r="3.700"/></g></g>
<g><path d="M474.5,550.0Q542.8,544.8 577.0,543.8C611.2,542.8 645.3,543.8 679.5,543.8C713.7,543.8 747.8,543.8 782.0,543.8C816.2,543.8 850.3,543.8 884.5,543.8C918.7,543.8 952.8,543.8 987.0,543.8C1021.2,543.8 1055.3,543.8 1089.5,543.8C1123.7,543.8 1159.3,533.9 1192.0,543.8Q1227.9,554.7 1294.5,612.3" fill="none" stroke="#5b9bd5" stroke-opacity="0.5" stroke-width="3.400" stroke-dasharray="9.800 10.400"/>
<g fill="#5b9bd5" fill-opacity="0.5"><circle cx="474.5" cy="550.0" r="3.700"/><circle cx="577.0" cy="543.8" r="3.700"/><circle cx="679.5" cy="543.8" r="3.700"/><circle cx="782.0" cy="543.8" r="3.700"/><circle cx="884.5" cy="543.8" r="3.700"/><circle cx="987.0" cy="543.8" r="3.700"/><circle cx="1089.5" cy="543.8" r="3.700"/><circle cx="1192.0" cy="543.8" r="3.700"/><circle cx="1294.5" cy="612.3" r="3.700"/></g></g>
<g><path d="M474.5,964.3Q542.8,964.9 577.0,964.3C611.2,963.7 645.3,960.3 679.5,960.4C713.7,960.5 747.8,965.2 782.0,964.8C816.2,964.4 850.3,958.7 884.5,957.7C918.6,956.7 952.8,957.5 987.0,958.7C1021.2,959.9 1055.3,964.9 1089.5,964.8C1123.7,964.7 1157.8,959.4 1192.0,958.3Q1226.1,957.2 1294.5,958.3" fill="none" stroke="#1f77b4" stroke-opacity="1" stroke-width="3.400"/>
<g fill="#1f77b4" fill-opacity="1"><circle cx="474.5" cy="964.3" r="3.700"/><circle cx="577.0" cy="964.3" r="3.700"/><circle cx="679.5" cy="960.4" r="3.700"/><circle cx="782.0" cy="964.8" r="3.700"/><circle cx="884.5" cy="957.7" r="3.700"/><circle cx="987.0" cy="958.7" r="3.700"/><circle cx="1089.5" cy="964.8" r="3.700"/><circle cx="1192.0" cy="958.3" r="3.700"/><circle cx="1294.5" cy="958.3" r="3.700"/></g></g>
<g><path d="M474.5,783.3Q542.8,784.4 577.0,784.7C611.2,785.0 645.3,784.8 679.5,785.0C713.7,785.2 747.8,786.7 782.0,786.0C816.2,785.3 850.3,781.5 884.5,781.0C918.7,780.5 952.8,782.1 987.0,782.7C1021.2,783.3 1055.3,783.3 1089.5,784.7C1123.7,786.1 1157.8,790.3 1192.0,791.0Q1226.2,791.7 1294.5,788.7" fill="none" stroke="#1f77b4" stroke-opacity="0.5" stroke-width="3.400" stroke-dasharray="9.800 10.400"/>
<g fill="#1f77b4" fill-opacity="0.5"><circle cx="474.5" cy="783.3" r="3.700"/><circle cx="577.0" cy="784.7" r="3.700"/><circle cx="679.5" cy="785.0" r="3.700"/><circle cx="782.0" cy="786.0" r="3.700"/><circle cx="884.5" cy="781.0" r="3.700"/><circle cx="987.0" cy="782.7" r="3.700"/><circle cx="1089.5" cy="784.7" r="3.700"/><circle cx="1192.0" cy="791.0" r="3.700"/><circle cx="1294.5" cy="788.7" r="3.700"/></g></g>
<text transform="translate(383.80,347.80) scale(0.975,1)">20k</text>
<text transform="translate(387.10,421.80) scale(0.913,1)" dx="-1.05 -1.05 0.00">10k</text>
<text transform="translate(398.50,495.80) scale(0.938,1)">0</text>
<text transform="translate(377.30,564.90) scale(0.981,1)" dx="-1.05 -1.05 0.00 0.00">1400</text>
<text transform="translate(377.80,606.80) scale(0.964,1)" dx="-1.05 -1.05 0.00 0.00">1300</text>
<text transform="translate(377.80,648.50) scale(0.964,1)" dx="-1.05 -1.05 0.00 0.00">1200</text>
<text transform="translate(381.80,689.70) scale(0.926,1)" dx="-1.05 -2.10 -1.05 0.00">1100</text>
<text transform="translate(377.80,731.80) scale(0.964,1)" dx="-1.05 -1.05 0.00 0.00">1000</text>
<text transform="translate(377.30,773.80) scale(0.981,1)" dx="-1.05 -1.05 0.00 0.00">1040</text>
<text transform="translate(377.80,827.70) scale(0.964,1)" dx="-1.05 -1.05 0.00 0.00">1030</text>
<text transform="translate(377.80,882.90) scale(0.964,1)" dx="-1.05 -1.05 0.00 0.00">1020</text>
<text transform="translate(381.80,936.80) scale(0.891,1)" dx="-1.05 -1.05 -1.05 -1.05">1010</text>
<text transform="translate(375.20,468.00) rotate(-90) scale(1.105,1)" font-size="16">Tot prod. [Bottles]</text>
<text transform="translate(369.20,677.75) rotate(-90) scale(1.124,1)" font-size="16">Time [min]</text>
<text transform="translate(369.20,934.00) rotate(-90) scale(1.106,1)" font-size="16">Rate [Bottles/h]</text>
<text transform="translate(457.20,1010.70) scale(1.034,1)">Apr 2</text>
<text transform="translate(560.20,1010.70) scale(1.004,1)">Apr 3</text>
<text transform="translate(662.35,1010.70) scale(1.025,1)">Apr 4</text>
<text transform="translate(764.85,1010.70) scale(1.025,1)">Apr 5</text>
<text transform="translate(867.35,1010.70) scale(1.025,1)">Apr 6</text>
<text transform="translate(970.35,1010.70) scale(0.995,1)">Apr 7</text>
<text transform="translate(1072.50,1010.70) scale(1.016,1)">Apr 8</text>
<text transform="translate(1174.85,1010.70) scale(1.025,1)">Apr 9</text>
<text transform="translate(1275.00,1010.70) scale(0.996,1)" dx="0.00 0.00 0.00 0.00 -1.05 -1.05">Apr 10</text>
<text transform="translate(459.30,1028.70) scale(0.995,1)">2023</text>
<path d="M1369,308.3h33.5" stroke="#4caf50" stroke-opacity="1" stroke-width="3.400" fill="none"/>
<circle cx="1385.700" cy="308.3" r="3.700" fill="#4caf50" fill-opacity="1"/>
<text transform="translate(1408.30,313.50) scale(1.095,1)">Total goods</text>
<path d="M1369,330h9.7M1388.900,330h9.7" stroke="#4caf50" stroke-opacity="0.5" stroke-width="3.400" fill="none"/>
<circle cx="1385.700" cy="330" r="3.700" fill="#4caf50" fill-opacity="0.5"/>
<text transform="translate(1408.30,335.20) scale(1.108,1)">Ideal production</text>
<path d="M1369,351.3h33.5" stroke="#f44336" stroke-opacity="1" stroke-width="3.400" fill="none"/>
<circle cx="1385.700" cy="351.3" r="3.700" fill="#f44336" fill-opacity="1"/>
<text transform="translate(1408.30,356.50) scale(1.094,1)">Total scraps</text>
<path d="M1369,372.4h33.5" stroke="#5b9bd5" stroke-opacity="1" stroke-width="3.400" fill="none"/>
<circle cx="1385.700" cy="372.4" r="3.700" fill="#5b9bd5" fill-opacity="1"/>
<text transform="translate(1408.30,377.60) scale(1.088,1)">Productive time</text>
<path d="M1369,394h9.7M1388.900,394h9.7" stroke="#5b9bd5" stroke-opacity="0.5" stroke-width="3.400" fill="none"/>
<circle cx="1385.700" cy="394" r="3.700" fill="#5b9bd5" fill-opacity="0.5"/>
<text transform="translate(1408.30,399.20) scale(1.063,1)">Planned Time</text>
<path d="M1369,415.3h33.5" stroke="#1f77b4" stroke-opacity="1" stroke-width="3.400" fill="none"/>
<circle cx="1385.700" cy="415.3" r="3.700" fill="#1f77b4" fill-opacity="1"/>
<text transform="translate(1408.30,420.50) scale(1.064,1)">Avg. prod. rate</text>
<path d="M1369,436.4h9.7M1388.900,436.4h9.7" stroke="#1f77b4" stroke-opacity="0.5" stroke-width="3.400" fill="none"/>
<circle cx="1385.700" cy="436.4" r="3.700" fill="#1f77b4" fill-opacity="0.5"/>
<text transform="translate(1408.30,441.60) scale(1.080,1)">Ideal prod. rate</text>
</svg>
<div style="position:absolute;left:262px;top:995px;width:31.6px;height:31px;background:#526bfa;border-radius:16px;"></div>
<svg class="ic" style="left:268px;top:1000px" width="20" height="22" viewBox="268 1000 20 22" fill="none" stroke="#fff" stroke-width="2.600"><path d="M280.600,1005.900L275.400,1011L280.600,1016.100"/></svg>
<div role="listbox" style="position:absolute;left:1702px;top:40px;width:170px;height:188.500px;background:#fff;border-radius:20px;box-shadow:0 4px 14px rgba(30,30,60,.17);overflow:hidden">
<div style="position:absolute;left:0;top:47px;width:170px;height:47px;background:#2b3990"></div></div>
<span class="t" style="left:1720.0px;top:56px;font-size:17px;color:#c5c9cf;transform:scaleX(0.977);">Hour</span>
<span class="t" style="left:1720.0px;top:103px;font-size:17px;transform:scaleX(1.006);-webkit-text-stroke:.25px #fff;">Day</span>
<span class="t" style="left:1720.0px;top:149px;font-size:17px;color:#6c757d;">Week</span>
<span class="t" style="left:1720.0px;top:196px;font-size:17px;color:#6c757d;transform:scaleX(1.037);">Month</span>
<div style="position:absolute;left:1914px;top:13px;width:7px;height:1046px;background:#323b9c;border-radius:3.5px;"></div>
</body></html>
